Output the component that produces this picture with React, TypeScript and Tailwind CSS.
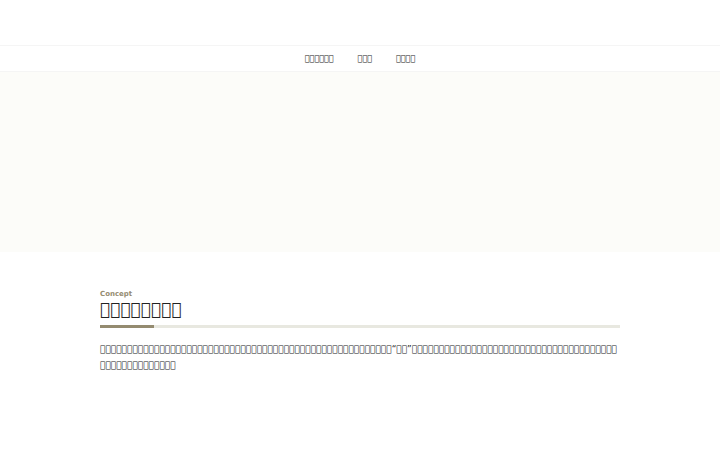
const box = (count: number) => '\uE000'.repeat(count)

const links = [
  { href: '#concept', label: box(6) },
  { href: '#works', label: box(3) },
  { href: '#contact', label: box(4) },
]

const description = `${box(54)}“${box(2)}”${box(52)}`

export default function App() {
  return (
    <div className="min-h-screen bg-white font-['DejaVu_Sans',sans-serif] text-[#222222]">
      <header>
        <div className="h-[45px]" />
        <nav className="flex h-[27px] items-center justify-center gap-6 border-y border-[#f5f5f5] text-[8px] leading-4">
          {links.map((link) => (
            <a key={link.href} href={link.href}>
              {link.label}
            </a>
          ))}
        </nav>
      </header>
      <div className="h-[180px] bg-[#fcfcf9]" />
      <main className="px-[100px] pt-[38px]">
        <section id="concept">
          <p className="text-[7px] leading-2 font-bold text-[#948b70]">Concept</p>
          <h1 className="text-[17px] leading-[22px]">{box(8)}</h1>
          <div className="mt-[5px] h-[3px] bg-[#e8e8e0]">
            <div className="h-full w-[54px] bg-[#948b70]" />
          </div>
          <p className="mt-[13px] text-[9px] leading-4 wrap-anywhere">{description}</p>
        </section>
      </main>
    </div>
  )
}
